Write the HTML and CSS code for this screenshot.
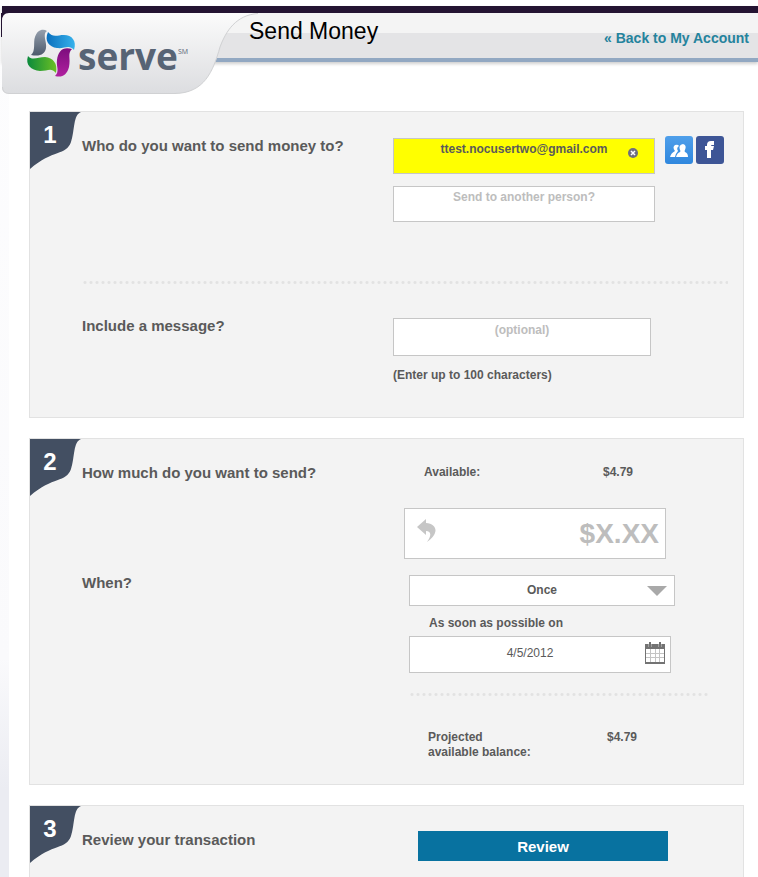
FILE: index.html
```
<!DOCTYPE html>
<html lang="en">
<head>
  <meta charset="UTF-8" />
  <title>Serve - Send Money</title>
  <link rel="stylesheet" href="styles.css">
</head>
<body>
  <header>
    <div class="title-bar">
      <h1>Send Money</h1>
      <a href="#" class="back">« Back to My Account</a>
    </div>
    <svg class="logo" width="260" height="96" viewBox="0 0 260 96" role="img" aria-label="serve">
      <defs>
        <linearGradient id="tab" x1="0" y1="0" x2="0" y2="1">
          <stop offset="0" stop-color="#fbfbfb" />
          <stop offset="1" stop-color="#dcdde0" />
        </linearGradient>
        <linearGradient id="gray" x1="0" y1="0" x2="0" y2="1">
          <stop offset="0" stop-color="#96a0ae" />
          <stop offset="1" stop-color="#4c596b" />
        </linearGradient>
        <linearGradient id="blue" x1="0" y1="0" x2="1" y2="0">
          <stop offset="0" stop-color="#0a6fbd" />
          <stop offset="1" stop-color="#37b2ec" />
        </linearGradient>
        <linearGradient id="purple" x1="0" y1="0" x2="0" y2="1">
          <stop offset="0" stop-color="#7c0d7d" />
          <stop offset="1" stop-color="#b0209f" />
        </linearGradient>
        <linearGradient id="green" x1="0" y1="0" x2="1" y2="0">
          <stop offset="0" stop-color="#0a8a3c" />
          <stop offset="1" stop-color="#6cc024" />
        </linearGradient>
      </defs>
      <path d="M1 37V13H10V16L3 22V37Z" fill="#241432" />
      <path d="M2 21Q2 13 9 13H258C236 15 226 31 220 47C213 72 204 93 175 93.500H9Q2 93.500 2 87Z" fill="url(#tab)" />
      <path d="M258 13.500C236 15 226 31 220 47C213 72 204 93 175 93.500H9Q2.500 93.500 2.500 87" fill="none" stroke="#d0d1d3" />
      <path d="M47 31C42 34 47 42 46 48C45 54 40 57 31 55C36 51 33 42 35 37C37 30 43 28 47 31Z" fill="url(#gray)" />
      <path d="M48 32C53 38 57 35 64 35C72 35 77 41 74 50C69 44 65 49 57 48C49 47 44 41 48 32Z" fill="url(#blue)" />
      <path d="M72 49C67 54 71 58 69 67C67 75 62 78 55 76C60 71 56 67 57 60C58 51 63 46 72 49Z" fill="url(#purple)" />
      <path d="M28 56C32 61 38 57 45 57C53 58 58 63 56 73C51 67 48 71 40 71C31 70 25 65 28 56Z" fill="url(#green)" />
      <text x="78" y="70" class="wordmark">serve</text>
      <text x="178" y="54" class="mark">SM</text>
    </svg>
  </header>

  <form id="send-form">
    <section class="panel">
      <div class="step">
        <svg width="52" height="58" viewBox="0 0 52 58"><path d="M0 0H51C43 3 45 18 41 30C36 44 23 37 0 57Z" /></svg>
        <span>1</span>
      </div>
      <div class="row">
        <label class="question" for="recipient">Who do you want to send money to?</label>
        <div class="recipients">
          <div class="fields">
            <div class="field">
              <input type="text" id="recipient" class="box filled" value="ttest.nocusertwo@gmail.com">
              <button type="button" class="remove" aria-label="Remove">
                <svg width="10" height="10" viewBox="0 0 10 10"><circle cx="5" cy="5" r="5" fill="#6e6e80" /><path d="M3 3L7 7M7 3L3 7" stroke="#fff" stroke-width="1.500" /></svg>
              </button>
            </div>
            <input type="text" class="box" placeholder="Send to another person?" aria-label="Send to another person?">
          </div>
          <div class="sources">
            <button type="button" class="contacts" aria-label="Contacts">
              <svg width="28" height="28" viewBox="0 0 28 28" fill="#fff">
                <path d="M10 9Q13 8 14 10Q11 12 13 15Q11 17 10 21H5Q6 17 10 15Q7 11 10 9Z" />
                <path d="M18 8Q22 9 20 14Q19 15 20 16Q23 17 23 21H11Q12 17 15 16Q16 15 15 14Q13 9 18 8Z" />
              </svg>
            </button>
            <button type="button" class="facebook" aria-label="Facebook">
              <svg width="28" height="28" viewBox="0 0 28 28" fill="#fff">
                <path d="M11 22V14H9V10H11V9Q11 5 15 5H18V9H16Q15 9 15 10H18L17 14H15V22Z" />
              </svg>
            </button>
          </div>
        </div>
      </div>
      <div class="dots"></div>
      <div class="row">
        <label class="question" for="message">Include a message?</label>
        <div class="fields">
          <textarea id="message" class="box" placeholder="(optional)" maxlength="100"></textarea>
          <p class="hint">(Enter up to 100 characters)</p>
        </div>
      </div>
    </section>

    <section class="panel">
      <div class="step">
        <svg width="52" height="58" viewBox="0 0 52 58"><path d="M0 0H51C43 3 45 18 41 30C36 44 23 37 0 57Z" /></svg>
        <span>2</span>
      </div>
      <div class="row">
        <label class="question" for="amount">How much do you want to send?</label>
        <div class="fields">
          <div class="total available"><span>Available:</span><span>$4.79</span></div>
          <div class="field amount">
            <input type="text" id="amount" class="box" placeholder="$X.XX">
            <button type="button" class="undo" aria-label="Undo">
              <svg width="20" height="24" viewBox="0 0 20 24"><path d="M0 8L9 0V4C21 5 22 15 10 23C15 16 14 12 9 12V16Z" fill="#c6c6c6" /></svg>
            </button>
          </div>
        </div>
      </div>
      <div class="row when">
        <label class="question" for="frequency">When?</label>
        <div class="fields schedule">
          <div class="field frequency">
            <select id="frequency" class="box">
              <option>Once</option>
              <option>Weekly</option>
              <option>Monthly</option>
            </select>
            <svg class="arrow" width="20" height="10" viewBox="0 0 20 10"><path d="M0 0H20L10 10Z" fill="#a9a9a9" /></svg>
          </div>
          <label class="date-label" for="date">As soon as possible on</label>
          <div class="field date">
            <input type="text" id="date" class="box" value="4/5/2012">
            <button type="button" class="calendar" aria-label="Pick a date">
              <svg width="20" height="22" viewBox="0 0 20 22">
                <path d="M0 2H20V22H0Z" fill="#737373" />
                <path d="M4 0H6V5H4ZM14 0H16V5H14Z" fill="#737373" />
                <path d="M3.500 2V5M6.500 2V5M13.500 2V5M16.500 2V5" stroke="#a0a0a0" />
                <path d="M1 7H19V20H1Z" fill="#fff" />
                <path d="M5.500 7V20M10.500 7V20M14.500 7V20M1 11.500H19M1 15.500H19" stroke="#c4c4c4" />
              </svg>
            </button>
          </div>
          <div class="dots"></div>
          <div class="total"><span>Projected<br>available balance:</span><span>$4.79</span></div>
        </div>
      </div>
    </section>

    <section class="panel last">
      <div class="step">
        <svg width="52" height="58" viewBox="0 0 52 58"><path d="M0 0H51C43 3 45 18 41 30C36 44 23 37 0 57Z" /></svg>
        <span>3</span>
      </div>
      <div class="row">
        <h2 class="question">Review your transaction</h2>
        <button type="submit" class="review">Review</button>
      </div>
    </section>
  </form>
</body>
</html>
```
FILE: styles.css
```
* {
  box-sizing: border-box;
}

body {
  margin: 0;
  min-height: 100vh;
  display: flex;
  flex-direction: column;
  font: bold 12px/15px "Liberation Sans", Arial, sans-serif;
  color: #5a5a5a;
  background: linear-gradient(#fdfdfe, #fafafc 75%, #ebecf2 90%) no-repeat 0 0 / 9px 100% #fff;
}

button {
  padding: 0;
  border: none;
  background: none;
  cursor: pointer;
}

svg {
  display: block;
}

/* Header */

header {
  position: relative;
  height: 111px;
  padding-top: 6px;
}

.title-bar {
  display: flex;
  justify-content: space-between;
  height: 56px;
  margin-left: 2px;
  padding: 5px 9px 0 247px;
  border-top: 7px solid #241432;
  border-bottom: 4px solid #92a8c2;
  background: linear-gradient(#f4f4f4 20px, #e4e4e6 20px);
  box-shadow: 0 2px 3px #d0d0d0;
}

h1 {
  margin: 0;
  font-size: 23px;
  line-height: 26px;
  font-weight: normal;
  color: #000;
}

.back {
  margin-top: 10px;
  font-size: 14px;
  line-height: 20px;
  color: #25839d;
  text-decoration: none;
}

.logo {
  position: absolute;
  top: 0;
  left: 0;
}

.wordmark {
  font: bold 37px "Open Sans", sans-serif;
  fill: #576475;
}

.mark {
  font: 7px "Open Sans", sans-serif;
  fill: #576475;
}

/* Panels */

#send-form {
  flex: 1;
  display: flex;
  flex-direction: column;
  gap: 20px;
  margin: 0 14px 0 29px;
}

.panel {
  position: relative;
  padding: 24px 15px 34px 52px;
  border: 1px solid #e2e2e2;
  background-color: #f3f3f3;
}

.panel + .panel {
  padding-bottom: 24px;
}

.panel.last {
  flex: 1;
  padding-bottom: 0;
  border-bottom: none;
}

.step {
  position: absolute;
  top: 0;
  left: 0;
  fill: #434f62;
}

.step span {
  position: absolute;
  top: 10px;
  left: 0;
  width: 40px;
  text-align: center;
  font-size: 24px;
  line-height: 26px;
  color: #fff;
}

.row {
  display: grid;
  grid-template-columns: 311px 1fr;
  align-items: start;
}

.question {
  margin: 0;
  font-size: 15px;
  line-height: 20px;
}

.fields {
  display: flex;
  flex-direction: column;
  align-items: flex-start;
  margin-top: 2px;
}

.dots {
  height: 3px;
  background: radial-gradient(circle, #e2e2e2 1px, transparent 2px) 0 0 / 6px 3px;
}

.panel > .dots {
  margin: 59px 0 32px;
}

/* Form controls */

.field {
  position: relative;
}

.field button,
.arrow {
  position: absolute;
}

.box {
  display: block;
  width: 262px;
  height: 36px;
  margin: 0;
  padding: 0 0 14px;
  border: 1px solid #c6c6c6;
  border-radius: 0;
  background-color: #fff;
  font: inherit;
  color: inherit;
  text-align: center;
}

.box::placeholder {
  color: #bdbdbd;
  opacity: 1;
}

.filled {
  background-color: #ff0;
}

.recipients {
  display: flex;
  gap: 10px;
}

.recipients .fields {
  gap: 12px;
}

.remove {
  top: 10px;
  right: 17px;
}

.sources {
  display: flex;
  gap: 3px;
}

.sources button {
  width: 28px;
  height: 28px;
  border-radius: 3px;
}

.contacts {
  background: linear-gradient(#4f9fea, #2f87de);
}

.facebook {
  background-color: #3d5596;
}

textarea.box {
  width: 258px;
  height: 38px;
  padding: 4px 0;
  resize: none;
  overflow: hidden;
}

.hint {
  margin: 12px 0 0;
}

.total {
  display: grid;
  grid-template-columns: 179px auto;
  padding-left: 19px;
}

.total.available {
  padding-left: 31px;
}

.amount {
  margin: 28px 0 0 11px;
}

.amount .box {
  height: 51px;
  padding: 0 6px;
  font-size: 28px;
  text-align: right;
}

.undo {
  top: 11px;
  left: 13px;
}

.when {
  margin-top: 14px;
}

.schedule {
  padding-left: 16px;
}

.frequency .box {
  width: 266px;
  height: 31px;
  padding: 0;
  appearance: none;
  text-align-last: center;
}

.arrow {
  top: 11px;
  right: 8px;
  pointer-events: none;
}

.date-label {
  margin: 10px 0 5px 20px;
}

.date .box {
  height: 37px;
  padding: 0 20px 4px 0;
  font-weight: normal;
}

.calendar {
  top: 6px;
  right: 6px;
}

.schedule .dots {
  width: 300px;
  margin: 20px 0 34px;
}

.review {
  width: 250px;
  height: 30px;
  margin: 1px 0 0 25px;
  font: bold 15px "Liberation Sans", Arial, sans-serif;
  color: #fff;
  background-color: #0872a0;
}
```
